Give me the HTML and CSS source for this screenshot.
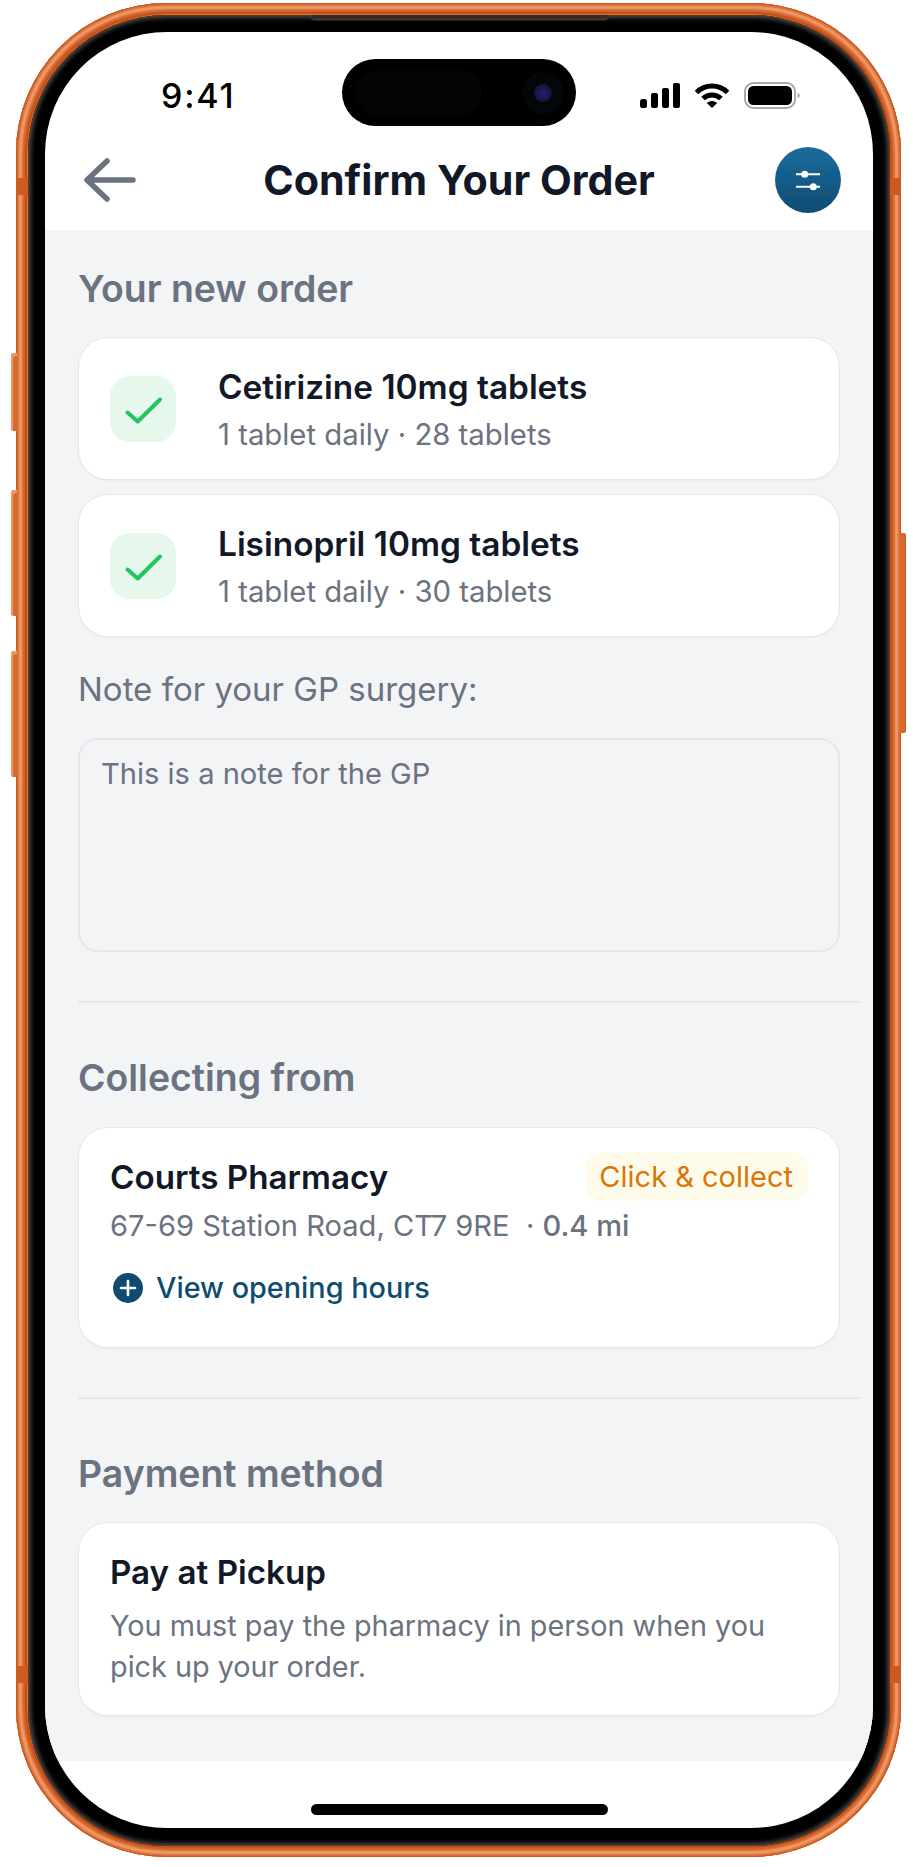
FILE: index.html
```html
<!DOCTYPE html>
<html lang="en">
<head>
    <meta charset="UTF-8">
    <meta name="viewport" content="width=device-width, initial-scale=1.0">
    <title>Confirm Your Order</title>
    <link rel="stylesheet" href="styles.css">
</head>
<body>

<div class="phone">
    <!-- side buttons and antenna bands sit on the frame -->
    <span class="side-btn btn-mute"></span>
    <span class="side-btn btn-up"></span>
    <span class="side-btn btn-down"></span>
    <span class="side-btn btn-power"></span>
    <span class="band band-tl"></span>
    <span class="band band-tr"></span>
    <span class="band band-bl"></span>
    <span class="band band-br"></span>

    <div class="bezel">
        <span class="speaker-lip"></span>
        <div class="screen">

            <div class="status-bar">
                <div class="time">9:41</div>
                <div class="island">
                    <span class="island-sensor"></span>
                    <span class="island-lens"><span class="lens-core"></span></span>
                </div>
                <div class="status-icons">
                    <svg class="signal" width="40" height="25" viewBox="0 0 40 25">
                        <rect x="0" y="16" width="7" height="9" rx="2.5"/>
                        <rect x="11" y="10" width="7" height="15" rx="2"/>
                        <rect x="22" y="5" width="7" height="20" rx="2"/>
                        <rect x="33" y="0" width="7" height="25" rx="2"/>
                    </svg>
                    <svg class="wifi" width="36" height="25" viewBox="0 0 36 25">
                        <path d="M2.5 9.5A22 22 0 0 1 33.5 9.5" fill="none" stroke="#000" stroke-width="5"/>
                        <path d="M9 15.5A13 13 0 0 1 27 15.5" fill="none" stroke="#000" stroke-width="5"/>
                        <path d="M18 25L12.8 20Q18 16 23.2 20Z" fill="#000"/>
                    </svg>
                    <svg class="battery" width="56" height="27" viewBox="0 0 56 27">
                        <rect x="1" y="1" width="50" height="25" rx="8.5" fill="none" stroke="#aaaaaa" stroke-width="2"/>
                        <rect x="4" y="4" width="44" height="19" rx="5.5" fill="#000"/>
                        <path d="M53.5 10.5Q56 12 56 13.5T53.5 16.5Z" fill="#aaaaaa"/>
                    </svg>
                </div>
            </div>

            <div class="top-bar">
                <svg class="back-arrow" width="52" height="44" viewBox="0 0 52 44">
                    <path d="M49 22H3M23 3L3 22L23 41" fill="none" stroke="#6b7280" stroke-width="5.5" stroke-linecap="round" stroke-linejoin="round"/>
                </svg>
                <h1 class="page-title">Confirm Your Order</h1>
                <div class="filter-btn">
                    <svg width="66" height="66" viewBox="0 0 66 66">
                        <path d="M21 27.3H45M21 39.7H45" stroke="#fff" stroke-width="2"/>
                        <circle cx="29.7" cy="27.3" r="3.5" fill="#fff"/>
                        <circle cx="38.3" cy="39.7" r="3.5" fill="#fff"/>
                    </svg>
                </div>
            </div>

            <div class="content">
                <h2 class="section-title first">Your new order</h2>

                <div class="card med-card">
                    <div class="check-box">
                        <svg width="66" height="66" viewBox="0 0 66 66">
                            <path d="M17.5 36.5L27.7 45.5L50 23.5" fill="none" stroke="#22c55e" stroke-width="4" stroke-linecap="round" stroke-linejoin="round"/>
                        </svg>
                    </div>
                    <div class="med-text">
                        <div class="card-title">Cetirizine 10mg tablets</div>
                        <div class="card-sub">1 tablet daily · 28 tablets</div>
                    </div>
                </div>

                <div class="card med-card">
                    <div class="check-box">
                        <svg width="66" height="66" viewBox="0 0 66 66">
                            <path d="M17.5 36.5L27.7 45.5L50 23.5" fill="none" stroke="#22c55e" stroke-width="4" stroke-linecap="round" stroke-linejoin="round"/>
                        </svg>
                    </div>
                    <div class="med-text">
                        <div class="card-title">Lisinopril 10mg tablets</div>
                        <div class="card-sub">1 tablet daily · 30 tablets</div>
                    </div>
                </div>

                <div class="note-label">Note for your GP surgery:</div>
                <div class="note-box">This is a note for the GP</div>

                <div class="divider"></div>

                <h2 class="section-title">Collecting from</h2>
                <div class="card pharmacy-card">
                    <div class="pharmacy-top">
                        <div class="card-title">Courts Pharmacy</div>
                        <div class="badge">Click &amp; collect</div>
                    </div>
                    <div class="card-sub address">67-69 Station Road, CT7 9RE &nbsp;· <span class="distance">0.4 mi</span></div>
                    <div class="hours-link">
                        <svg width="32" height="32" viewBox="0 0 32 32">
                            <circle cx="16" cy="16" r="15" fill="#0f4c6f"/>
                            <path d="M9 16H23M16 9V23" stroke="#fff" stroke-width="2.6" stroke-linecap="round"/>
                        </svg>
                        <span>View opening hours</span>
                    </div>
                </div>

                <div class="divider"></div>

                <h2 class="section-title tight">Payment method</h2>
                <div class="card pay-card">
                    <div class="card-title">Pay at Pickup</div>
                    <div class="card-sub pay-text">You must pay the pharmacy in person when you pick up your order.</div>
                </div>
            </div>

            <div class="home-area">
                <span class="home-bar"></span>
            </div>

        </div>
    </div>
</div>

</body>
</html>
```

FILE: styles.css
```css
html, body {
    margin: 0;
    background: #fff;
}

body {
    padding: 3px 0 10px 16px;
    font-family: Inter, "Noto Sans", sans-serif;
    color: #111827;
}

/* Frame */
.phone {
    position: relative;
    box-sizing: border-box;
    width: 885px;
    height: 1854px;
    padding: 12px 11px 11px 12px;
    border-radius: 150px;
    background: #e2773c;
    box-shadow:
        inset 0 0 0 1px #c25720,
        inset 0 0 2px 3px #d96d33,
        inset 0 0 2px 6px #f2a075,
        inset 0 0 2px 9px #d9682c,
        inset 0 0 1px 11px #b84c18;
}

.side-btn {
    position: absolute;
    width: 6px;
    background: #d96a2f;
    box-shadow: inset 2px 3px 1px #ee9a6c;
}

.btn-mute { left: -5px; top: 350px; height: 78px; border-radius: 3px 0 0 3px; }
.btn-up { left: -5px; top: 487px; height: 126px; border-radius: 3px 0 0 3px; }
.btn-down { left: -5px; top: 648px; height: 126px; border-radius: 3px 0 0 3px; }
.btn-power {
    right: -5px;
    top: 530px;
    height: 200px;
    border-radius: 0 3px 3px 0;
    box-shadow: inset -1px 0 1px #c25720;
}

.band {
    position: absolute;
    width: 12px;
    height: 17px;
    background: #cf5a1e;
}

.band-tl { left: 0; top: 175px; }
.band-tr { right: 0; top: 175px; }
.band-bl { left: 0; top: 1663px; }
.band-br { right: 0; top: 1663px; }

.bezel {
    position: relative;
    box-sizing: border-box;
    height: 100%;
    padding: 17px 17px 18px 17px;
    border-radius: 138px;
    background: #000;
    box-shadow: inset 0 0 0 1px #6b3518, inset 0 0 4px 3px #484848;
}

.speaker-lip {
    position: absolute;
    left: 283px;
    top: 0;
    width: 297px;
    height: 4px;
    border-radius: 0 0 8px 8px;
    background: #3a2a20;
    box-shadow: 0 1px 2px #555;
}

.screen {
    display: flex;
    flex-direction: column;
    height: 100%;
    overflow: hidden;
    border-radius: 122px;
    background: #fff;
}

/* Status bar */
.status-bar {
    display: grid;
    grid-template-columns: 1fr 234px 1fr;
    height: 98px;
    box-sizing: border-box;
    padding-top: 27px;
}

.time {
    padding: 19px 0 0 116px;
    font-size: 34px;
    line-height: 36px;
    font-weight: 500;
    letter-spacing: 1.8px;
    color: #000;
}

.island {
    display: flex;
    align-items: center;
    justify-content: space-between;
    box-sizing: border-box;
    height: 67px;
    padding: 0 12px 0 13px;
    border-radius: 34px;
    background: #000;
}

.island-sensor {
    width: 127px;
    height: 46px;
    border-radius: 23px;
    background: #040404;
}

.island-lens {
    display: flex;
    align-items: center;
    justify-content: center;
    width: 42px;
    height: 42px;
    border-radius: 50%;
    background: #04060a;
}

.lens-core {
    width: 18px;
    height: 18px;
    border-radius: 50%;
    background: radial-gradient(circle, #2a1c6e 0%, #16184a 55%, #0a0d1e 100%);
}

.status-icons {
    display: flex;
    align-items: flex-start;
    padding: 24px 0 0 64px;
}

.signal { margin-right: 14px; }
.wifi { margin-right: 14px; }
.battery { margin-top: -1px; }

/* Header */
.top-bar {
    display: grid;
    grid-template-columns: 1fr auto 1fr;
    align-items: center;
    height: 100px;
    padding: 0 32px;
}

.back-arrow {
    justify-self: start;
    margin-left: 7px;
}

.page-title {
    margin: 0;
    font-size: 41.2px;
    line-height: 48px;
    font-weight: 700;
    color: #111827;
}

.filter-btn {
    justify-self: end;
    width: 66px;
    height: 66px;
    border-radius: 50%;
    background: linear-gradient(180deg, #1a6c9c 0%, #0f4c73 100%);
}

/* Content */
.content {
    flex: 1;
    padding: 0 33px;
    background: #f3f4f6;
}

.section-title {
    margin: 53px 0 27px;
    font-size: 37.4px;
    line-height: 44px;
    font-weight: 600;
    color: #6b7280;
}

.section-title.first {
    margin-top: 37px;
    margin-bottom: 26px;
}

.section-title.tight {
    margin-bottom: 26px;
}

.card {
    box-sizing: border-box;
    border: 1px solid #e5e7eb;
    border-radius: 30px;
    background: #fff;
    box-shadow: 0 1px 2px rgba(0, 0, 0, 0.04);
}

.med-card {
    display: flex;
    align-items: center;
    gap: 42px;
    height: 143px;
    margin-bottom: 14px;
    padding: 0 31px;
}

.med-text {
    padding-top: 4px;
}

.med-text .card-title {
    font-size: 33.4px;
}

.check-box {
    flex: none;
    width: 66px;
    height: 66px;
    border-radius: 20px;
    background: #e6f8ec;
}

.card-title {
    font-size: 33.2px;
    line-height: 40px;
    font-weight: 600;
    color: #111827;
}

.card-sub {
    margin-top: 8px;
    font-size: 29.3px;
    line-height: 40px;
    color: #6b7280;
}

.note-label {
    margin-top: 32px;
    font-size: 33px;
    line-height: 40px;
    color: #6b7280;
}

.note-box {
    box-sizing: border-box;
    height: 214px;
    margin-top: 29px;
    padding: 14px 21px;
    border: 2px solid #e5e7eb;
    border-radius: 20px;
    font-size: 29.1px;
    line-height: 40px;
    color: #6b7280;
}

.divider {
    height: 2px;
    margin: 49px -21px 0 0;
    background: #e5e7eb;
}

.pharmacy-card {
    height: 221px;
    padding: 24px 31px 0;
}

.pharmacy-top {
    display: flex;
    align-items: center;
    justify-content: space-between;
}

.badge {
    padding: 4px 15px 4px 13px;
    border-radius: 16px;
    background: #fefbeb;
    font-size: 29px;
    line-height: 41px;
    color: #d97706;
}

.address {
    margin-top: 5px;
    font-size: 29.1px;
}

.distance {
    font-weight: 500;
}

.hours-link {
    display: flex;
    align-items: center;
    gap: 12px;
    margin-top: 22px;
    padding-left: 2px;
    font-size: 28.8px;
    line-height: 40px;
    font-weight: 500;
    color: #0f4c6f;
}

.pay-card {
    height: 194px;
    padding: 29px 31px 0;
}

.pay-text {
    margin-top: 13px;
    font-size: 28.8px;
    line-height: 41px;
}

/* Home indicator */
.home-area {
    display: flex;
    justify-content: center;
    height: 67px;
    padding-top: 43px;
    box-sizing: border-box;
}

.home-bar {
    width: 297px;
    height: 11px;
    border-radius: 6px;
    background: #000;
}
```
